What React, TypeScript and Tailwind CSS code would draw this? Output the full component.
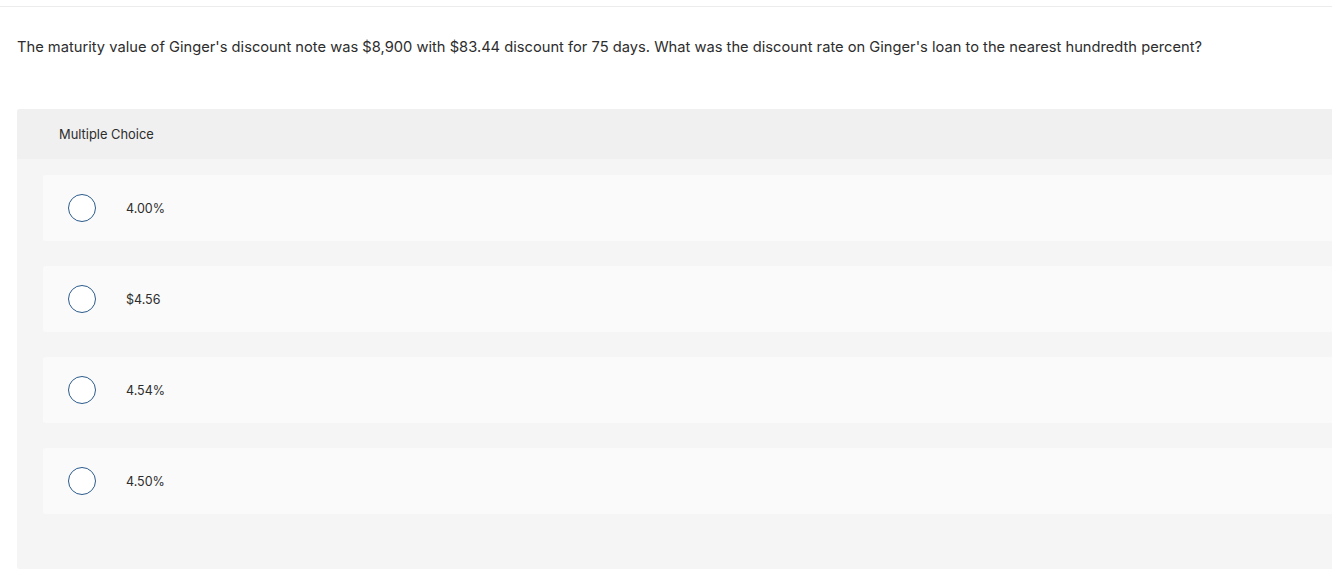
const options = ['4.00%', '$4.56', '4.54%', '4.50%']

function Radio() {
  return <span className="block h-[28px] w-[28px] shrink-0 rounded-full border-[1.5px] border-[#2b5b8c] bg-white" />
}

export default function App() {
  return (
    <div className="h-[577px] w-full overflow-hidden bg-white text-[#333]" style={{ fontFamily: 'Inter, Lato, sans-serif' }}>
      <div className="h-[7px] border-b border-[#ececec]" />
      <p className="ml-[17px] mt-[31px] text-[14.7px] leading-[18px] text-[#2d2d2d]">
        The maturity value of Ginger's discount note was $8,900 with $83.44 discount for 75 days. What was the discount rate on Ginger's loan to the nearest hundredth percent?
      </p>
      <section className="ml-[17px] mr-[-20px] mt-[53px] rounded-[3px] bg-[#f5f5f5] pb-[55px]">
        <div className="flex h-[50px] items-center rounded-t-[3px] bg-[#f0f0f0] pl-[42px] pt-[2px] text-[12.9px] text-[#2d2d2d]">
          Multiple Choice
        </div>
        <div className="mt-[16px] flex flex-col gap-[25px] pl-[26px]">
          {options.map((option) => (
            <div key={option} className="flex h-[66px] items-center rounded-[3px] bg-[#fafafa] pl-[25px]">
              <Radio />
              <span className="ml-[30px] pt-[2px] text-[12.5px] text-[#2d2d2d]">{option}</span>
            </div>
          ))}
        </div>
      </section>
    </div>
  )
}
